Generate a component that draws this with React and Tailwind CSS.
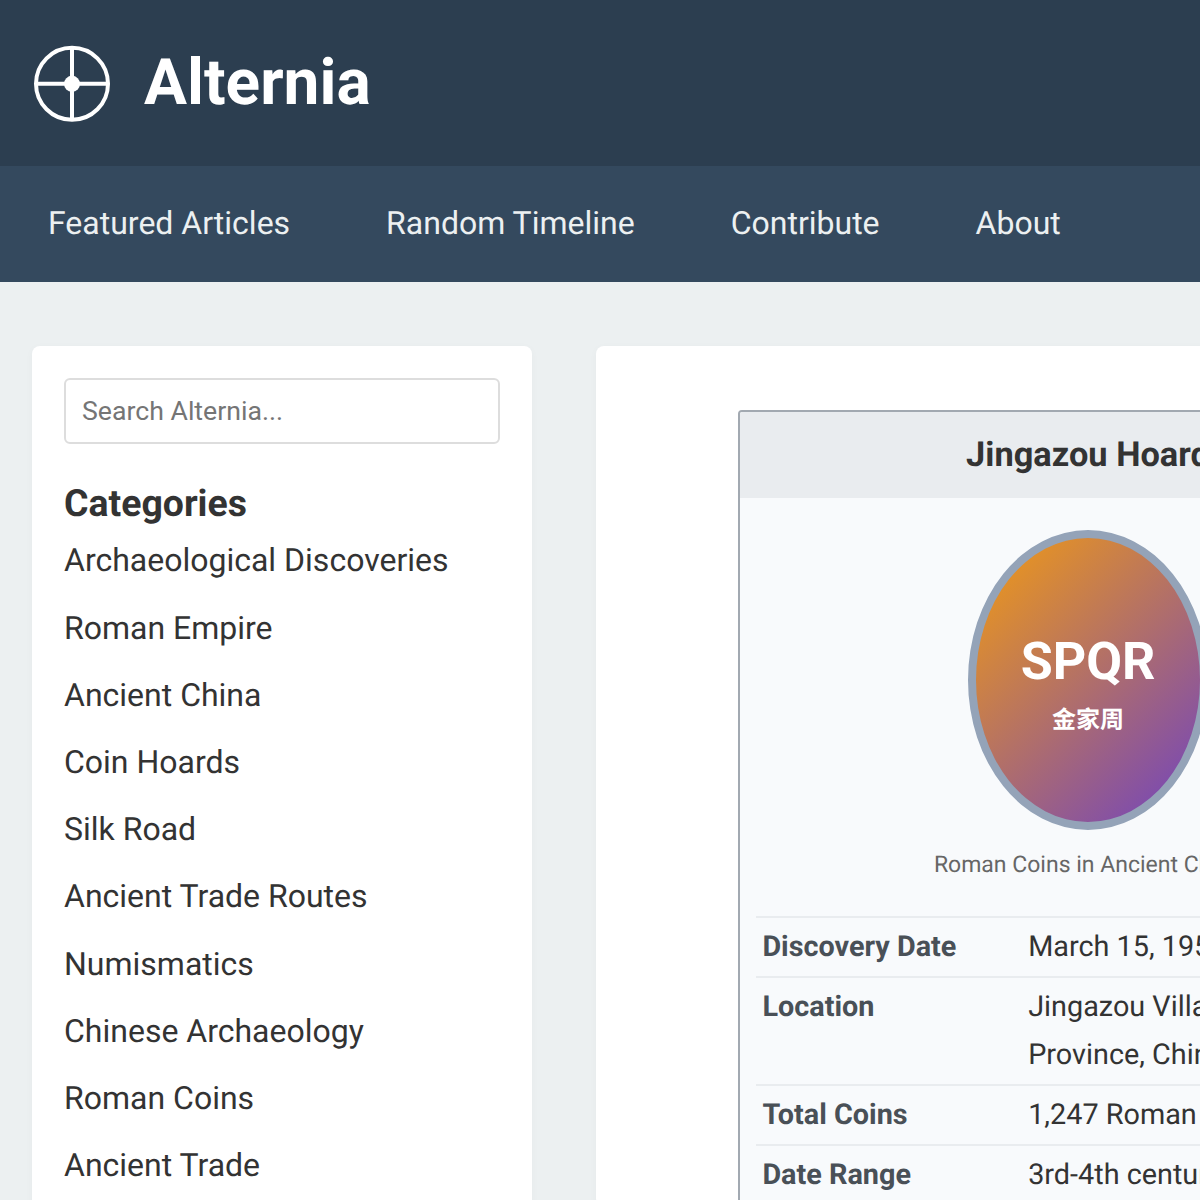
import React from "react";

const navLinks = ["Featured Articles", "Random Timeline", "Contribute", "About"];

const categories = [
  "Archaeological Discoveries",
  "Roman Empire",
  "Ancient China",
  "Coin Hoards",
  "Silk Road",
  "Ancient Trade Routes",
  "Numismatics",
  "Chinese Archaeology",
  "Roman Coins",
  "Ancient Trade",
];

const facts = [
  { label: "Discovery Date", value: "March 15, 1954" },
  { label: "Location", value: "Jingazou Village, Hubei Province, China" },
  { label: "Total Coins", value: "1,247 Roman coins" },
  { label: "Date Range", value: "3rd-4th century CE" },
];

const Logo = () => (
  <svg viewBox="0 -0.8 80 80" className="w-20 h-20 shrink-0" fill="none" stroke="white" strokeWidth="4">
    <circle cx="40" cy="40" r="36" />
    <path d="M40 4V76M4 40H76" />
    <circle cx="40" cy="40" r="8" fill="white" stroke="none" />
  </svg>
);

export default function App() {
  return (
    <div className="h-[1200px] overflow-hidden bg-[#ecf0f1] text-[32px] leading-[1.6] text-[#333] font-['Roboto',sans-serif] [text-rendering:geometricPrecision]">
      <header className="flex items-center gap-8 p-8 bg-[#2c3e50] text-white">
        <Logo />
        <h1 className="text-[64px] font-bold leading-[1.6]">Alternia</h1>
      </header>

      <nav className="flex bg-[#34495e] py-8 text-[#ecf0f1]">
        {navLinks.map((link) => (
          <a key={link} className="px-12">
            {link}
          </a>
        ))}
      </nav>

      <div className="flex items-start gap-16 p-8 pt-16 w-[2000px]">
        <aside className="w-[500px] shrink-0 bg-white rounded-lg p-8 shadow-[0_2px_8px_rgba(0,0,0,0.03)]">
          <input
            placeholder="Search Alternia..."
            className="w-full h-[66px] mb-[31px] px-4 pt-[1px] border-2 border-[#ddd] rounded-[6px] text-[26.67px] placeholder:text-[#757575] outline-none"
          />
          <h3 className="mb-[1px] text-[37.44px] font-bold leading-[1.6]">Categories</h3>
          <ul>
            {categories.map((cat) => (
              <li key={cat} className="mb-4">
                {cat}
              </li>
            ))}
          </ul>
        </aside>

        <main className="w-[1000px] shrink-0 bg-white rounded-lg pt-16 pl-[142px] shadow-[0_2px_8px_rgba(0,0,0,0.03)]">
          <div className="w-[700px] border-2 border-[#a2a9b1] rounded-[4px] overflow-hidden bg-[#f8fafc]">
            <div className="bg-[#e9ecef] p-4 text-center text-[34.4px] leading-[54px] font-bold">Jingazou Hoard</div>

            <div className="p-8 text-center">
              <div className="mx-auto flex flex-col items-center justify-center w-[240px] h-[300px] rounded-[50%] border-8 border-[#94a3b8] bg-linear-[135deg,#f39c12,#6f42c1] text-white">
                <div className="text-[52px] font-bold leading-[1.6]">SPQR</div>
                <div className="-mt-[2px] text-[24px] font-bold leading-[1.6] font-['Roboto','Noto_Sans_CJK_SC',sans-serif]">金家周</div>
              </div>
              <p className="mt-4 text-[23px] leading-[38.4px] text-[#666] whitespace-nowrap">Roman Coins in Ancient China</p>
            </div>

            <table className="w-[664px] mx-4 text-[28.8px] leading-[48px] table-fixed">
              <tbody>
                {facts.map((fact) => (
                  <tr key={fact.label} className="border-t-2 border-[#e9ecef] align-top">
                    <th className="w-[40%] pl-[6.4px] pr-[6px] py-[5px] text-left font-bold text-[#495057]">{fact.label}</th>
                    <td className="pl-[6.6px] pr-[6px] py-[5px]">{fact.value}</td>
                  </tr>
                ))}
              </tbody>
            </table>
          </div>
        </main>
      </div>
    </div>
  );
}
